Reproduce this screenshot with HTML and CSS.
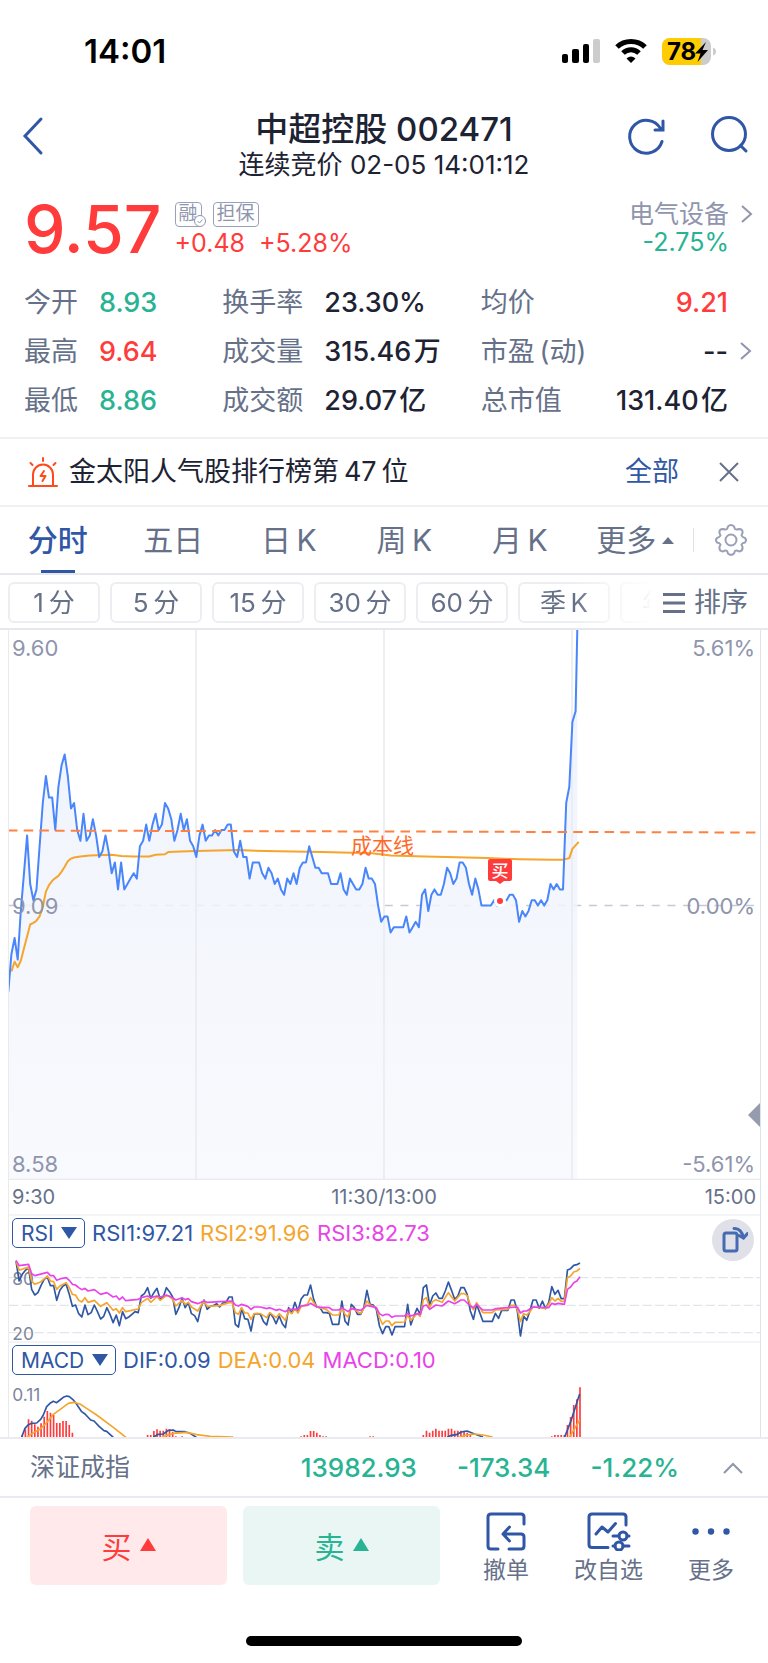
FILE: index.html
```html
<!DOCTYPE html>
<html lang="zh-CN">
<head>
  <meta charset="UTF-8" />
  <meta name="viewport" content="width=device-width, initial-scale=1.0" />
  <title>中超控股 002471</title>
  <link rel="stylesheet" href="styles.css">
</head>
<body>
  <div class="status-bar">
    <span class="clock">14:01</span>
    <svg class="status-icons" width="156" height="32" viewBox="0 0 156 32">
      <rect x="2" y="19" width="6" height="9" rx="2"/>
      <rect x="12" y="14" width="7" height="14" rx="2"/>
      <rect x="23" y="9" width="6" height="19" rx="2"/>
      <rect x="33" y="4" width="7" height="24" rx="2" fill="#ccc"/>
      <g fill="none" stroke="#000" stroke-width="5">
        <path d="M57 12C64.500 4.500 77.500 4.500 85 12"/>
        <path d="M63 18C67.500 13.500 74.500 13.500 79 18"/>
      </g>
      <path d="M66.500 23.500Q71 19.500 75.500 23.500L71 28Z"/>
      <rect x="102" y="3" width="49" height="27" rx="8" fill="#ccc"/>
      <path d="M110 3H141V30H110A8 8 0 0 1 102 22V11A8 8 0 0 1 110 3Z" fill="#fc0"/>
      <path d="M153 12.500Q156 13.500 156 16.500T153 20.500Z" fill="#ccc"/>
      <text x="107" y="25" class="battery-text">78</text>
      <path d="M146 7L135 18.500H140.500L137.500 27L148 15H142.500Z"/>
    </svg>
  </div>

  <header class="header">
    <button class="icon-btn" aria-label="返回">
      <svg width="24" height="40" viewBox="0 0 24 40"><path d="M20 3L4 20L20 37"/></svg>
    </button>
    <div class="title">
      <h1>中超控股 002471</h1>
      <p>连续竞价 02-05 14:01:12</p>
    </div>
    <div class="header-actions">
      <button class="icon-btn" aria-label="刷新">
        <svg width="40" height="40" viewBox="0 0 40 40"><path d="M35 25.500A16.500 16.500 0 1 1 33.500 12.500M36 5V14H28"/></svg>
      </button>
      <button class="icon-btn" aria-label="搜索">
        <svg width="40" height="40" viewBox="0 0 40 40"><circle cx="19" cy="18" r="16.500"/><path d="M30.500 29.500L36 35"/></svg>
      </button>
    </div>
  </header>

  <section class="quote">
    <strong class="price">9.57</strong>
    <div class="quote-mid">
      <div class="badges">
        <span class="badge checked">融<svg width="14" height="14" viewBox="0 0 14 14"><circle cx="7" cy="7" r="5.500"/><path d="M4.500 7L6.500 9L9.500 5.500"/></svg></span>
        <span class="badge">担保</span>
      </div>
      <div class="change"><span>+0.48</span><span>+5.28%</span></div>
    </div>
    <a class="sector" href="#">
      <span class="sector-name">电气设备</span>
      <svg class="chevron" width="14" height="22" viewBox="0 0 14 22"><path d="M2 3L11 11L2 19"/></svg>
      <span class="down">-2.75%</span>
    </a>
  </section>

  <dl class="stats">
    <div><dt>今开</dt><dd class="down">8.93</dd></div>
    <div><dt>换手率</dt><dd>23.30%</dd></div>
    <div class="last"><dt>均价</dt><dd class="up">9.21</dd></div>
    <div><dt>最高</dt><dd class="up">9.64</dd></div>
    <div><dt>成交量</dt><dd>315.46&#8202;万</dd></div>
    <div class="last"><dt>市盈&#8201;(动)</dt><dd>--<svg class="chevron" width="14" height="22" viewBox="0 0 14 22"><path d="M2 3L11 11L2 19"/></svg></dd></div>
    <div><dt>最低</dt><dd class="down">8.86</dd></div>
    <div><dt>成交额</dt><dd>29.07&#8202;亿</dd></div>
    <div class="last"><dt>总市值</dt><dd>131.40&#8202;亿</dd></div>
  </dl>

  <div class="notice">
    <svg width="32" height="32" viewBox="0 0 32 32" fill="none" stroke="#ff4a1c" stroke-width="2" stroke-linecap="round">
      <path d="M2 30H30M6 30V18.500A10 10 0 0 1 26 18.500V30M16 2V5M3.500 7L5.500 9M28.500 7L26.500 9"/>
      <path d="M17 15L13.500 20H18.500L15.500 25" stroke-linejoin="round"/>
    </svg>
    <p>金太阳人气股排行榜第&#8201;47&#8201;位</p>
    <a href="#">全部</a>
    <button aria-label="关闭"><svg width="22" height="22" viewBox="0 0 22 22"><path d="M2 2L20 20M20 2L2 20"/></svg></button>
  </div>

  <nav class="tabs">
    <button class="tab active">分时</button>
    <button class="tab">五日</button>
    <button class="tab">日&#8201;K</button>
    <button class="tab">周&#8201;K</button>
    <button class="tab">月&#8201;K</button>
    <button class="tab more">更多</button>
    <button class="settings" aria-label="设置">
      <svg width="34" height="34" viewBox="0 0 34 34">
        <circle cx="17" cy="17" r="5.500"/>
        <path d="M14 3.500Q17 .5 20 3.500L21 6Q22.500 7 25 6Q29 6 28.500 10L27.500 12.500Q28 14 31 15Q33 17 31 19.500Q28 20 27.500 21.500L28.500 24Q29 28 25 28.500Q22.500 27 21 28L20 30.500Q17 33.500 14 30.500L13 28Q11.500 27 9 28.500Q5 28 5.500 24L6.500 21.500Q6 20 3 19.500Q1 17 3 15Q6 14 6.500 12.500L5.500 10Q5 6 9 6Q11.500 7 13 6Z"/>
      </svg>
    </button>
  </nav>

  <div class="periods">
    <div class="chips">
      <button>1&#8201;分</button>
      <button>5&#8201;分</button>
      <button>15&#8201;分</button>
      <button>30&#8201;分</button>
      <button>60&#8201;分</button>
      <button>季&#8201;K</button>
      <button>年&#8201;K</button>
    </div>
    <button class="sort">
      <svg width="24" height="22" viewBox="0 0 24 22"><path d="M1 2.500H23M1 11H23M1 19.500H23"/></svg>
      排序
    </button>
  </div>

  <main class="charts">
    <svg class="price-chart" viewBox="9 0 751 550">
      <defs>
        <linearGradient id="areaFill" x1="0" y1="0" x2="0" y2="1">
          <stop offset="0" stop-color="#eaf0fb"/>
          <stop offset="1" stop-color="#f8f9fd"/>
        </linearGradient>
      </defs>
      <path class="dash" d="M8 275.500H760"/>
      <path id="priceArea" fill="url(#areaFill)" fill-opacity=".85"/>
      <path class="grid" d="M196 0V550M384 0V550M572 0V550M9 549.500H760"/>
      <polyline id="avgLine" class="line avg"/>
      <polyline id="priceLine" class="line price-line"/>
      <path class="cost" d="M8 200.500L758 202.500"/>
      <text class="cost-text" x="351" y="223">成本线</text>
      <circle cx="500" cy="271" r="6" fill="#fff"/>
      <circle cx="500" cy="271" r="3" fill="#ff3b3b"/>
      <path d="M490 229H510Q512 229 512 231V249Q512 251 510 251H504L500 254L496 251H490Q488 251 488 249V231Q488 229 490 229Z" fill="#ff3b3b"/>
      <text class="buy-mark" x="500" y="247">买</text>
      <path d="M760 473V497L748 485Z" fill="#959cad"/>
      <g class="axis">
        <text x="12" y="26">9.60</text>
        <text x="12" y="284">9.09</text>
        <text x="12" y="542">8.58</text>
        <text x="755" y="26" text-anchor="end">5.61%</text>
        <text x="755" y="284" text-anchor="end">0.00%</text>
        <text x="755" y="542" text-anchor="end">-5.61%</text>
      </g>
    </svg>
    <div class="times"><span>9:30</span><span>11:30/13:00</span><span>15:00</span></div>

    <section class="panel">
      <div class="panel-head">
        <label class="picker"><select aria-label="指标一"><option>RSI</option></select></label>
        <span class="c1">RSI1:97.21</span><span class="c2">RSI2:91.96</span><span class="c3">RSI3:82.73</span>
        <button class="rotate" aria-label="横屏">
          <svg width="30" height="30" viewBox="0 0 30 30"><rect x="6" y="8" width="13" height="18" rx="2"/><path d="M16 3.500Q23 3 25.500 12.500M21 10.500L25.500 13L29.500 8.500"/></svg>
        </button>
      </div>
      <svg viewBox="27 279 2253 261">
        <path class="dash3" d="M27 350H2280M27 433H2280M27 515H2280"/>
        <g class="axis small"><text x="37" y="372">80</text><text x="37" y="537">20</text></g>
        <polyline id="rsi1" class="line3 s1"/>
        <polyline id="rsi2" class="line3 s2"/>
        <polyline id="rsi3" class="line3 s3"/>
      </svg>
    </section>

    <section class="panel">
      <div class="panel-head">
        <label class="picker"><select aria-label="指标二"><option>MACD</option></select></label>
        <span class="c1">DIF:0.09</span><span class="c2">DEA:0.04</span><span class="c3">MACD:0.10</span>
      </div>
      <svg class="clipped" viewBox="27 663 2253 168">
        <g class="axis small"><text x="37" y="724">0.11</text></g>
        <path id="macdBars" class="bars"/>
        <path class="line3 s1" d="M65 831L75 805L84 795L95 790L110 789L122 778L130 765L140 740L150 730L160 724L170 728L180 720L190 712L200 708L208 710L218 718L228 730L245 755L255 762L272 780L282 783L298 800L312 812L320 814L342 834M460 831L475 823L490 822L505 811L520 810L528 815L555 815L570 820L592 834M1342 831L1354 826L1369 824L1384 816L1401 813L1424 822L1449 831M1694 831L1712 785L1739 702"/>
        <path class="line3 s2" d="M78 834L100 818L120 808L140 788L160 763L185 745L205 730L222 727L240 732L260 745L290 765L340 802L380 834M485 831L520 820L560 817L590 824L630 829L700 831M1375 833L1400 825L1424 822L1449 825L1478 831M1707 834L1739 780"/>
      </svg>
    </section>
  </main>

  <div class="index-bar">
    <span class="index-name">深证成指</span>
    <span>13982.93</span>
    <span>-173.34</span>
    <span>-1.22%</span>
    <button aria-label="展开"><svg width="22" height="14" viewBox="0 0 22 14"><path d="M2 12L11 3L20 12"/></svg></button>
  </div>

  <footer class="footer">
    <button class="trade buy">买</button>
    <button class="trade sell">卖</button>
    <div class="tools">
      <button>
        <svg width="42" height="40" viewBox="0 0 42 40"><path d="M13 38H6Q3 38 3 35V6Q3 3 6 3H36Q39 3 39 6V13M18 23H36Q39 23 39 26V35Q39 38 36 38H24M24.500 16L18 23L24.500 30"/></svg>
        撤单
      </button>
      <button>
        <svg width="44" height="40" viewBox="0 0 44 40"><path d="M21 36.500H5Q2 36.500 2 33.500V6Q2 3 5 3H36Q39 3 39 6V14M9 23L15 16L21 21L28.500 12.500M26 25H32M40 25H42M26 35H28M36 35H42"/><circle cx="36" cy="25" r="4"/><circle cx="32" cy="35" r="4"/></svg>
        改自选
      </button>
      <button>
        <svg width="42" height="40" viewBox="0 0 42 40"><g class="dots"><circle cx="5.500" cy="20.500" r="3.200"/><circle cx="21" cy="20.500" r="3.200"/><circle cx="36.500" cy="20.500" r="3.200"/></g></svg>
        更多
      </button>
    </div>
  </footer>
  <div class="home-bar"></div>

  <script>
    // minute prices, in cents above or below the previous close (9.09)
    const prices = [
      -16,-9,-6,-10,-1,6,13,4,1,3,11,19,24,20,20,14,22,26,28,24,18,19,14,12,17,12,13,16,13,9,
      10,13,10,6,8,3,8,3,4,5,6,5,11,12,15,12,15,17,14,15,19,18,16,12,14,17,14,16,12,11,
      9,13,15,12,13,13,14,13,14,14,15,15,10,9,12,9,9,5,8,8,8,6,5,7,6,4,5,3,2,5,
      4,6,4,7,8,8,11,9,7,7,6,6,6,4,4,4,6,3,2,5,4,3,3,4,7,5,5,4,0,-3,
      -2,-2,-5,-4,-4,-4,-4,-2,-5,-4,-3,-4,2,3,-1,2,3,2,2,4,7,6,4,5,8,8,7,4,2,5,
      3,0,0,0,0,1,0,1,1,1,2,2,1,-3,-1,-2,-1,1,1,0,1,0,1,4,3,4,3,3,19,22,34,36
    ];
    const average = [
      [1,-12.2],[2,-10.4],[3,-11.4],[4,-10.2],[5,-7.9],[6,-5.7],[7,-3.5],[8,-3.2],[9,-2.8],[10,-2],
      [11,-.2],[12,2.6],[13,3.8],[14,4.6],[15,5.1],[16,5.5],[17,6.3],[18,7.2],[19,8.2],[20,8.7],[21,8.9],
      [23,9.1],[26,9.3],[33,9.4],[36,9.2],[40,9.1],[45,9.1],[47,9.4],[50,9.5],[51,9.9],[55,10],[60,10.1],
      [73,10.3],[82,10.1],[100,9.9],[116,9.7],[122,9.3],[133,9.1],[153,8.8],[163,8.6],[174,8.5],[177,8.5],
      [179,8.8],[180,10.5],[182,11.8]
    ];

    const x = i => (8.3 + i * 3.134).toFixed(1);
    const y = p => (275.6 - p * 5.4).toFixed(1);
    const pricePoints = prices.map((p, i) => `${x(i)},${y(p)}`);
    pricePoints.push(`${x(prices.length - 0.4)},${y(52)}`);

    document.getElementById("priceLine").setAttribute("points", pricePoints.join(" "));
    document.getElementById("priceArea").setAttribute("d", `M${pricePoints.join("L")}V550H8Z`);
    document.getElementById("avgLine").setAttribute("points", average.map(([i, p]) => `${x(i)},${y(p)}`).join(" "));

    // indicator curves, index -> y in the panel's own units
    const panelX = i => (48 + i * 9.4).toFixed(1);
    const rsi1 = [
      300,360,340,328,320,385,402,395,373,355,348,374,374,418,388,375,370,400,436,432,458,468,432,461,455,432,452,474,466,440,
      460,485,462,494,452,473,468,460,452,455,405,398,380,412,395,382,415,408,380,392,408,460,440,412,440,425,458,464,482,440,
      417,445,436,434,428,438,426,424,408,408,490,498,442,473,475,510,460,458,460,482,492,456,468,488,465,488,500,440,456,424,
      450,414,402,402,372,415,438,440,455,455,457,490,490,490,420,480,492,430,440,460,460,440,388,430,432,445,495,518,497,497,
      522,497,497,497,497,430,492,465,442,460,380,372,432,405,396,412,412,390,363,388,415,405,380,380,400,450,475,430,455,481,
      481,481,481,457,472,448,448,448,417,417,450,525,465,478,450,417,417,442,420,443,425,377,400,388,413,413,327,323,313,311,306
    ].map((v, i) => [i, v]);
    const rsi2 = [
      [0,300],[1,328],[4,318],[5,360],[6,370],[8,362],[10,345],[11,360],[12,362],[13,385],[14,375],[16,365],[17,380],[18,400],
      [19,402],[20,418],[21,423],[22,410],[23,424],[25,418],[27,436],[29,425],[31,448],[32,443],[33,456],[34,440],[35,452],
      [39,444],[40,425],[42,412],[43,424],[45,407],[46,418],[48,404],[49,406],[50,415],[51,435],[53,418],[54,430],[55,424],
      [56,438],[58,450],[60,420],[61,436],[65,434],[68,425],[69,425],[70,455],[71,460],[72,440],[73,456],[74,456],[75,475],
      [76,458],[78,458],[80,470],[81,455],[83,470],[84,458],[86,478],[87,450],[88,458],[89,444],[90,456],[91,436],[93,430],
      [94,410],[96,438],[99,445],[101,462],[103,462],[104,440],[105,460],[106,468],[107,440],[110,458],[111,442],[112,420],
      [113,432],[115,440],[116,470],[117,490],[118,480],[119,480],[120,494],[121,484],[124,483],[125,463],[126,478],[128,458],
      [129,466],[130,416],[131,410],[132,440],[133,422],[134,416],[136,424],[138,395],[140,420],[142,398],[143,398],[144,404],
      [145,432],[146,446],[147,425],[149,455],[152,455],[153,447],[157,445],[158,433],[159,433],[160,445],[161,482],[162,458],
      [163,462],[164,452],[165,438],[169,442],[170,430],[171,410],[172,420],[173,412],[174,421],[175,421],[176,350],[177,345],
      [178,333],[179,330],[180,322]
    ];
    const rsi3 = [
      [0,298],[1,314],[4,310],[5,338],[6,344],[10,334],[11,344],[12,344],[13,358],[14,354],[16,350],[17,358],[18,370],[19,372],
      [20,380],[21,386],[22,382],[23,390],[25,386],[27,400],[29,395],[31,408],[32,405],[33,416],[34,408],[35,419],[39,415],
      [40,410],[42,405],[43,410],[45,405],[46,408],[48,402],[50,410],[51,417],[53,410],[54,416],[55,413],[56,422],[58,428],
      [60,420],[61,424],[65,422],[69,420],[70,432],[71,435],[72,430],[74,436],[75,445],[76,438],[78,438],[80,443],[81,440],
      [83,448],[84,445],[86,452],[87,445],[90,445],[91,435],[93,433],[94,427],[96,438],[100,440],[101,447],[103,447],[104,440],
      [106,452],[107,443],[110,448],[112,433],[115,440],[116,458],[117,464],[118,460],[119,461],[120,469],[121,465],[124,465],
      [125,457],[126,465],[128,458],[129,460],[130,435],[131,432],[132,445],[134,432],[136,435],[138,420],[140,428],[142,417],
      [143,417],[145,435],[146,440],[147,430],[149,447],[152,447],[153,443],[157,440],[160,438],[161,456],[162,450],[163,450],
      [165,438],[170,440],[171,427],[172,430],[173,427],[175,430],[176,385],[177,378],[178,365],[179,360],[180,347]
    ];
    Object.entries({ rsi1, rsi2, rsi3 }).forEach(([id, data]) => {
      document.getElementById(id).setAttribute("points", data.map(([i, v]) => `${panelX(i)},${v}`).join(" "));
    });

    // runs of MACD bars: first index, then the top of each bar
    const bars = [
      [2, 825,808,778,782,793,800,790,770,753,758,765,789,789,783,783,795,818],
      [42, 825,825,813,808,812,812,806,808,815,829,831,829],
      [91, 829,825,825,813,813,818,825,829,829],
      [113, 829,829],
      [130, 825,812,818,812,806,812,812,812,806,806,812,812,812,812,818,825],
      [171, 829,825,825,825,825,795,771,735,718,682]
    ];
    document.getElementById("macdBars").setAttribute("d",
      bars.map(([start, ...tops]) => tops.map((t, i) => `M${panelX(start + i)} ${t}V831`).join("")).join(""));
  </script>
</body>
</html>
```

FILE: styles.css
```css
* {
  box-sizing: border-box;
}

body {
  margin: 0;
  background: #fff;
  color: #1d2333;
  font-family: Inter, "Noto Sans CJK SC", sans-serif;
}

h1, p, dl, dd {
  margin: 0;
}

button {
  border: none;
  padding: 0;
  background: none;
  color: inherit;
  font: inherit;
  cursor: pointer;
}

a {
  color: inherit;
  text-decoration: none;
}

svg {
  display: block;
}

.up {
  color: #ff3b3b;
}

.down {
  color: #28b393;
}

.chevron {
  fill: none;
  stroke: #8f95ad;
  stroke-width: 2;
}

.status-bar {
  display: flex;
  justify-content: space-between;
  align-items: center;
  padding: 35px 52px 37px 84px;
}

.clock {
  color: #000;
  font-size: 33px;
  line-height: 32px;
  font-weight: 600;
}

.battery-text {
  font-size: 24px;
  font-weight: 700;
}

.header {
  display: flex;
  justify-content: space-between;
  align-items: flex-start;
  padding: 6px 18px 0 21px;
}

.title {
  flex: 1;
  padding-left: 96px;
  text-align: center;
}

.title h1 {
  font-size: 33px;
  line-height: 39px;
  font-weight: 500;
}

.title p {
  font-size: 26px;
  line-height: 31px;
}

.header-actions {
  display: flex;
  gap: 43px;
}

.icon-btn {
  height: 51px;
  display: flex;
  align-items: center;
}

.icon-btn svg {
  fill: none;
  stroke: #2f57a5;
  stroke-width: 3;
  stroke-linecap: round;
}

.quote {
  display: flex;
  padding: 20px 14px 20px 24px;
}

.price {
  color: #ff3b3b;
  font-size: 66px;
  line-height: 58px;
  font-weight: 500;
}

.quote-mid {
  flex: 1;
  padding-left: 13px;
}

.badges {
  display: flex;
  gap: 11px;
  height: 29px;
  padding-top: 2px;
}

.badge {
  position: relative;
  height: 25px;
  padding: 0 3px;
  border: 1px solid #9aa0bb;
  border-radius: 4px;
  color: #8f95ad;
  font-size: 19px;
  line-height: 22px;
}

.badge svg {
  position: absolute;
  right: -6px;
  bottom: -2px;
  fill: #fff;
  stroke: #8f95ad;
}

.change {
  display: flex;
  gap: 14px;
  color: #ff3b3b;
  font-size: 25px;
  line-height: 28px;
}

.sector {
  display: grid;
  grid-template-columns: auto 14px;
  column-gap: 11px;
  align-items: center;
  align-content: start;
  text-align: right;
  font-size: 25px;
  line-height: 28px;
}

.sector-name {
  color: #8f95ad;
}

.stats {
  display: grid;
  grid-template-columns: 198fr 258fr 247fr;
  padding: 0 40px 12px 24px;
  font-size: 27px;
  line-height: 49px;
}

.stats div {
  display: flex;
  gap: 21px;
}

.stats dt {
  color: #667189;
}

.stats dd {
  font-weight: 500;
}

.stats .last {
  position: relative;
  justify-content: space-between;
}

.stats .chevron {
  position: absolute;
  right: -25px;
  top: 13px;
}

.notice {
  display: flex;
  align-items: center;
  padding: 0 28px 0 27px;
  border-top: 2px solid #eff0f3;
  border-bottom: 2px solid #eff0f3;
  font-size: 27px;
  line-height: 66px;
}

.notice p {
  flex: 1;
  padding-left: 10px;
}

.notice a {
  color: #2f57a5;
  margin-right: 39px;
}

.notice button svg {
  fill: none;
  stroke: #667189;
  stroke-width: 2;
}

.tabs {
  display: flex;
  border-bottom: 2px solid #e6e8ee;
  font-size: 30px;
  line-height: 65px;
  color: #667189;
}

.tab {
  position: relative;
  flex: 1;
}

.tab.active {
  color: #2f57a5;
  font-weight: 500;
}

.tab.active::after {
  content: "";
  position: absolute;
  left: 50%;
  bottom: 0;
  width: 34px;
  height: 3px;
  margin-left: -17px;
  background: #2f57a5;
}

.tab.more {
  display: flex;
  align-items: center;
  justify-content: center;
  gap: 6px;
}

.tab.more::after {
  content: "";
  border: 6px solid transparent;
  border-top: 0;
  border-bottom: 7px solid #667189;
}

.settings {
  display: flex;
  align-items: center;
  justify-content: center;
  width: 75px;
  margin: 21px 0;
  height: 24px;
  border-left: 1px solid #e0e2e9;
}

.settings svg {
  fill: none;
  stroke: #9aa0b5;
  stroke-width: 2;
}

.periods {
  display: flex;
  align-items: center;
  padding: 7px 20px 5px 8px;
  border-bottom: 2px solid #e6e8ee;
  color: #667189;
  font-size: 26px;
}

.chips {
  flex: 1;
  min-width: 0;
  display: flex;
  gap: 10px;
  overflow: hidden;
  -webkit-mask-image: linear-gradient(90deg, #000 88%, transparent 100%);
  mask-image: linear-gradient(90deg, #000 88%, transparent 100%);
}

.chips button {
  flex: 0 0 92px;
  height: 41px;
  border: 2px solid #eceef2;
  border-radius: 6px;
  line-height: 36px;
}

.sort {
  display: flex;
  align-items: center;
  gap: 8px;
  padding-left: 10px;
  font-size: 27px;
  line-height: 40px;
}

.sort svg {
  stroke: #667189;
  stroke-width: 3;
}

.charts {
  margin: 0 7px 0 8px;
  border-left: 1px solid #e8eaef;
  border-right: 1px solid #e0e2e9;
}

.charts > svg,
.panel > svg {
  width: 100%;
  height: auto;
}

.panel > svg {
  overflow: visible;
}

.panel > .clipped {
  overflow: hidden;
}

.grid {
  fill: none;
  stroke: #e8eaef;
  stroke-width: 1.5;
}

.dash {
  stroke: #c5c9d6;
  stroke-width: 1.5;
  stroke-dasharray: 8 7.7;
}

.line {
  fill: none;
  stroke-width: 2;
  stroke-linejoin: round;
}

.price-line {
  stroke: #4a86fb;
}

.avg {
  stroke: #f5a52c;
}

.cost {
  stroke: #ff8142;
  stroke-width: 2;
  stroke-dasharray: 9.5 6.2;
}

.cost-text {
  fill: #ff6a2a;
  font-size: 21px;
}

.buy-mark {
  fill: #fff;
  font-size: 17px;
  font-weight: 500;
  text-anchor: middle;
}

.axis {
  fill: #8f95ad;
  font-size: 22px;
}

.axis.small {
  fill: #7d869b;
  font-size: 52px;
}

.times {
  display: grid;
  grid-template-columns: 1fr 1fr 1fr;
  padding: 0 4px 0 3px;
  color: #667189;
  font-size: 20px;
  line-height: 34px;
}

.times span:nth-child(2) {
  text-align: center;
}

.times span:last-child {
  text-align: right;
}

.panel {
  border-top: 2px solid #f3f4f6;
}

.panel-head {
  position: relative;
  display: flex;
  align-items: center;
  gap: 7px;
  height: 38px;
  padding: 0 0 4px 3px;
  font-size: 22px;
}

.picker {
  display: flex;
  align-items: center;
  gap: 7px;
  height: 30px;
  padding: 0 7px 0 8px;
  border: 1px solid #2f57a5;
  border-radius: 5px;
  color: #2f57a5;
  font-size: 21px;
}

.picker::after {
  content: "";
  border: 8px solid transparent;
  border-bottom: 0;
  border-top: 12px solid #2f57a5;
}

.picker select {
  appearance: none;
  border: none;
  padding: 0;
  background: none;
  color: inherit;
  font: inherit;
}

.c1 {
  color: #2f57a5;
}

.c2 {
  color: #f5a52c;
}

.c3 {
  color: #e844e8;
}

.rotate {
  position: absolute;
  right: 6px;
  top: 3px;
  display: flex;
  align-items: center;
  justify-content: center;
  width: 42px;
  height: 42px;
  border-radius: 50%;
  background: #dfe0e8;
}

.rotate svg {
  fill: none;
  stroke: #466bb0;
  stroke-width: 3;
  stroke-linecap: round;
}

.dash3 {
  stroke: #e3e5ec;
  stroke-width: 4;
  stroke-dasharray: 28 10;
}

.line3 {
  fill: none;
  stroke-width: 5;
  stroke-linejoin: round;
}

.s1 {
  stroke: #2f57a5;
}

.s2 {
  stroke: #f5a52c;
}

.s3 {
  stroke: #e844e8;
}

.bars {
  stroke: #ff3b3b;
  stroke-width: 5;
}

.index-bar {
  display: flex;
  align-items: center;
  gap: 40px;
  padding: 0 24px 0 30px;
  border-top: 2px solid #e9ebf0;
  border-bottom: 2px solid #e9ebf0;
  color: #28b393;
  font-size: 26px;
  font-weight: 500;
  line-height: 57px;
}

.index-name {
  flex: 1;
  color: #667189;
  font-size: 25px;
  font-weight: 400;
}

.index-bar button {
  margin-left: 3px;
}

.index-bar svg {
  fill: none;
  stroke: #8f95ad;
  stroke-width: 2;
}

.footer {
  display: flex;
  padding: 8px 28px 0 30px;
}

.trade {
  display: flex;
  align-items: center;
  justify-content: center;
  gap: 8px;
  flex: 0 1 197px;
  height: 79px;
  padding-bottom: 2px;
  margin-right: 16px;
  border-radius: 6px;
  font-size: 30px;
}

.trade::after {
  content: "";
  border: 8px solid transparent;
  border-top: 0;
  border-bottom: 13px solid currentColor;
}

.buy {
  background: #ffe9ea;
  color: #ff3b3b;
}

.sell {
  background: #e9f6f4;
  color: #28b393;
}

.tools {
  flex: 1;
  display: flex;
  justify-content: space-between;
  padding: 5px 6px 0 27px;
}

.tools button {
  display: flex;
  flex-direction: column;
  align-items: center;
  gap: 4px;
  color: #667189;
  font-size: 23px;
  line-height: 30px;
}

.tools svg {
  fill: none;
  stroke: #2f57a5;
  stroke-width: 3;
  stroke-linecap: round;
  stroke-linejoin: round;
}

.tools .dots {
  fill: #2f57a5;
  stroke: none;
}

.home-bar {
  width: 36%;
  height: 10px;
  margin: 51px auto 17px;
  border-radius: 5px;
  background: #000;
}
```
